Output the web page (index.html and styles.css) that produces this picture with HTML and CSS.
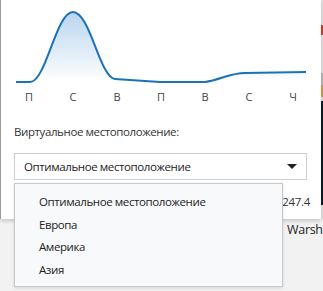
FILE: index.html
```html
<!DOCTYPE html>
<html lang="ru">
<head>
<meta charset="UTF-8">
<meta name="viewport" content="width=device-width, initial-scale=1.0">
<title>Виртуальное местоположение</title>
<link rel="stylesheet" href="styles.css">
</head>
<body>
<div class="desk">
  <div class="top-row">
    <div class="panel">
      <svg class="chart" width="320" height="88" viewBox="0 0 320 88">
        <defs>
          <linearGradient id="fill" x1="0" y1="0" x2="0" y2="1">
            <stop offset="0" stop-color="#b9d5ee"/>
            <stop offset="1" stop-color="#ffffff"/>
          </linearGradient>
        </defs>
        <path d="M16 82 L30 82 C46 82 56 12 73 12 C90 12 100 78 115 79 L160 82 L205 82 C220 80 230 73 245 73 L306 72 L306 82 Z" fill="url(#fill)"/>
        <path d="M16 82 L30 82 C46 82 56 12 73 12 C90 12 100 78 115 79 L160 82 L205 82 C220 80 230 73 245 73 L306 72" fill="none" stroke="#1c72ba" stroke-width="2"/>
      </svg>
      <div class="days">
        <span>П</span><span>С</span><span>В</span><span>П</span><span>В</span><span>С</span><span>Ч</span>
      </div>
      <div class="field-label">Виртуальное местоположение:</div>
      <div class="select">
        <span>Оптимальное местоположение</span>
        <span class="caret"></span>
      </div>
      <div class="stats">
        <span>1</span>
        <span>247.4</span>
      </div>
    </div>
    <div class="side">
      <div class="side-red"></div>
      <div class="side-gray"></div>
      <div class="side-orange"></div>
      <div class="side-dark"></div>
    </div>
  </div>
  <div class="below">Warsh</div>

  <ul class="menu">
    <li>Оптимальное местоположение</li>
    <li>Европа</li>
    <li>Америка</li>
    <li>Азия</li>
  </ul>
</div>
</body>
</html>
```

FILE: styles.css
```css
body {margin: 0; background-color: #f2f2f2; font-family: "Open Sans", "Noto Sans", sans-serif; overflow: hidden;}

.desk {position: relative; width: 323px; height: 291px; overflow: hidden;}
.top-row {display: flex; height: 219px;}

.panel {
  width: 320px;
  height: 219px;
  flex: none;
  background: white;
  border-left: 1px solid #9a9a9a;
  box-shadow: 0 2px 4px rgba(0, 0, 0, 0.18);
  position: relative;
  z-index: 1;
}
.chart {display: block; margin-left: -1px;}

.days {
  display: flex;
  padding-left: 6px;
  font-size: 11px;
  color: #444;
  height: 18px;
  line-height: 18px;
}
.days span {width: 44px; text-align: center;}

.field-label {
  margin: 18px 0 0 13px;
  font-size: 11.5px;
  letter-spacing: -0.4px;
  color: #333;
  line-height: 16px;
}

.select {
  display: flex;
  align-items: center;
  justify-content: space-between;
  margin: 13px 0 0 13px;
  width: 293px;
  height: 27px;
  box-sizing: border-box;
  border: 1px solid #cfcfcf;
  padding: 0 9px 0 9px;
  font-size: 11.5px;
  letter-spacing: -0.4px;
  color: #222;
}
.caret {
  width: 0;
  height: 0;
  border-left: 5px solid transparent;
  border-right: 5px solid transparent;
  border-top: 5px solid #222;
}

.stats {
  display: flex;
  justify-content: space-between;
  margin: 14px 0 0 13px;
  width: 296px;
  font-size: 11.5px;
  letter-spacing: -0.3px;
  color: #333;
}

.side {display: flex; flex-direction: column; width: 3px; background: #e2e2e2;}
.side-red {height: 10px; margin-top: 25px; background: #d83a2c;}
.side-gray {height: 12px; margin-top: 38px; background: #b8b8b8;}
.side-orange {height: 12px; background: #d49a4a;}
.side-dark {height: 104px; margin-top: 4px; background: #0e1b2c;}

.below {
  padding: 2px 0 0 287px;
  font-size: 12.5px;
  letter-spacing: -0.3px;
  color: #222;
  white-space: nowrap;
}

.menu {
  position: absolute;
  left: 14px;
  top: 183px;
  width: 269px;
  height: 104px;
  box-sizing: border-box;
  margin: 0;
  padding: 7px 0 0 24px;
  list-style: none;
  background: #f8f9fa;
  border: 1px solid #c8c8c8;
  box-shadow: 0 1px 3px rgba(0, 0, 0, 0.12);
  z-index: 2;
  font-size: 11.5px;
  letter-spacing: -0.4px;
  color: #222;
}
.menu li {height: 22.5px; line-height: 22.5px;}
```
